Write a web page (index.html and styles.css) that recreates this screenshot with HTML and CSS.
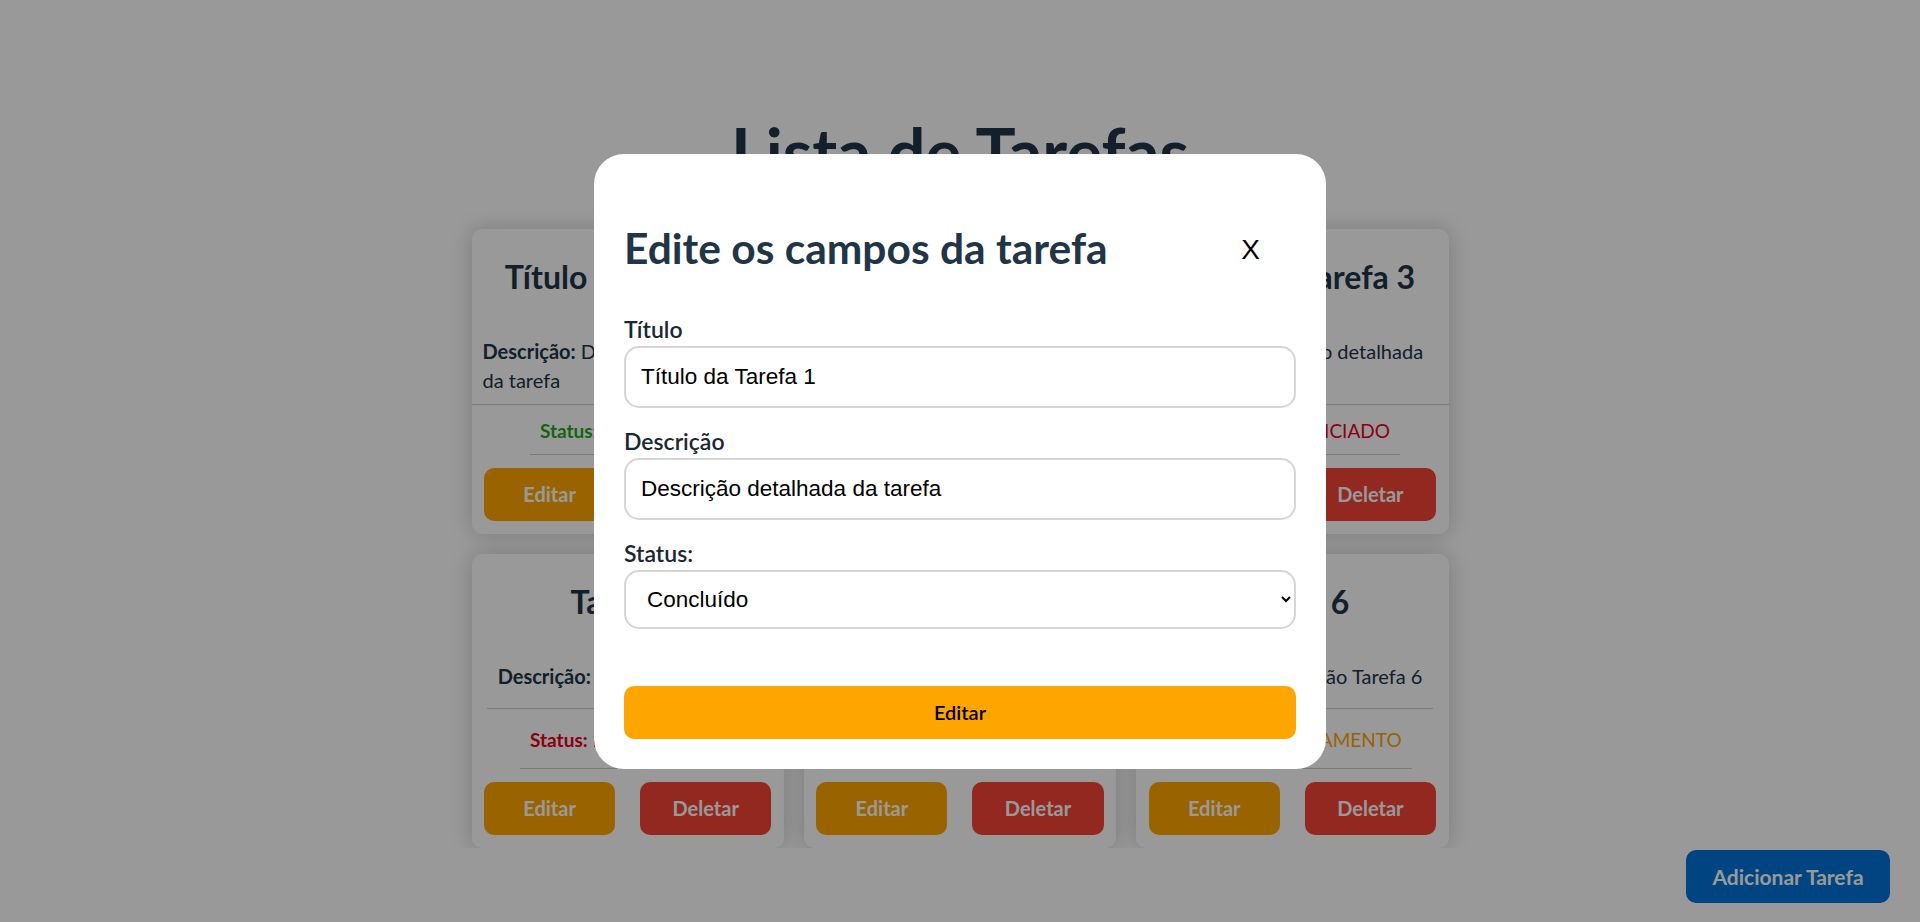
FILE: index.html
```html
<!DOCTYPE html>
<html lang="pt-BR">
<head>
<meta charset="utf-8">
<title>Lista de Tarefas</title>
<link rel="stylesheet" href="styles.css">
</head>
<body>
<div class="app">
  <h1 class="page-title">Lista de Tarefas</h1>
  <section class="board">
    <div class="grid">
      <article class="card">
        <h2 class="card-title">Título da Tarefa 1</h2>
        <p class="card-desc"><strong>Descrição:</strong> Descrição detalhada da tarefa</p>
        <p class="card-status status-done"><strong>Status:</strong>&nbsp;CONCLUÍDO</p>
        <div class="card-actions">
          <button class="btn btn-edit">Editar</button>
          <button class="btn btn-delete">Deletar</button>
        </div>
      </article>
      <article class="card">
        <h2 class="card-title">Título da Tarefa 2</h2>
        <p class="card-desc"><strong>Descrição:</strong> Descrição detalhada da tarefa</p>
        <p class="card-status status-progress"><strong>Status:</strong>&nbsp;EM ANDAMENTO</p>
        <div class="card-actions">
          <button class="btn btn-edit">Editar</button>
          <button class="btn btn-delete">Deletar</button>
        </div>
      </article>
      <article class="card">
        <h2 class="card-title">Título da Tarefa 3</h2>
        <p class="card-desc"><strong>Descrição:</strong> Descrição detalhada da tarefa</p>
        <p class="card-status status-todo"><strong>Status:</strong>&nbsp;NÃO INICIADO</p>
        <div class="card-actions">
          <button class="btn btn-edit">Editar</button>
          <button class="btn btn-delete">Deletar</button>
        </div>
      </article>
      <article class="card">
        <h2 class="card-title">Tarefa 4</h2>
        <p class="card-desc"><strong>Descrição:</strong> Descrição Tarefa 4</p>
        <p class="card-status status-todo"><strong>Status:</strong>&nbsp;NÃO INICIADO</p>
        <div class="card-actions">
          <button class="btn btn-edit">Editar</button>
          <button class="btn btn-delete">Deletar</button>
        </div>
      </article>
      <article class="card">
        <h2 class="card-title">Tarefa 5</h2>
        <p class="card-desc"><strong>Descrição:</strong> Descrição Tarefa 5</p>
        <p class="card-status status-done"><strong>Status:</strong>&nbsp;CONCLUÍDO</p>
        <div class="card-actions">
          <button class="btn btn-edit">Editar</button>
          <button class="btn btn-delete">Deletar</button>
        </div>
      </article>
      <article class="card">
        <h2 class="card-title">Tarefa 6</h2>
        <p class="card-desc"><strong>Descrição:</strong> Descrição Tarefa 6</p>
        <p class="card-status status-progress"><strong>Status:</strong>&nbsp;EM ANDAMENTO</p>
        <div class="card-actions">
          <button class="btn btn-edit">Editar</button>
          <button class="btn btn-delete">Deletar</button>
        </div>
      </article>
    </div>
  </section>
  <button class="add-btn">Adicionar Tarefa</button>
</div>

<div class="overlay">
  <div class="modal" role="dialog" aria-labelledby="modal-title">
    <div class="modal-header">
      <h2 class="modal-title" id="modal-title">Edite os campos da tarefa</h2>
      <button class="modal-close" aria-label="Fechar">X</button>
    </div>
    <form class="modal-form">
      <div class="field">
        <label class="field-label" for="f-title">Título</label>
        <input class="field-input" id="f-title" type="text" value="Título da Tarefa 1">
      </div>
      <div class="field">
        <label class="field-label" for="f-desc">Descrição</label>
        <input class="field-input" id="f-desc" type="text" value="Descrição detalhada da tarefa">
      </div>
      <div class="field">
        <label class="field-label" for="f-status">Status:</label>
        <select class="field-input field-select" id="f-status">
          <option>Não iniciado</option>
          <option>Em andamento</option>
          <option selected>Concluído</option>
        </select>
      </div>
      <button type="button" class="modal-submit">Editar</button>
    </form>
  </div>
</div>
</body>
</html>
```

FILE: styles.css
```css
* { box-sizing: border-box; }

html, body {
  margin: 0;
  height: 100%;
}

body {
  font-family: Lato, "Noto Sans", sans-serif;
  color: #213547;
  background: #ffffff;
  line-height: 1.5;
  overflow: hidden;
}

.app {
  display: flex;
  flex-direction: column;
  align-items: center;
  padding-top: 115px;
}

.page-title {
  margin: 0;
  font-size: 67px;
  line-height: 1.1;
  font-weight: 700;
}

.board {
  width: 100%;
  overflow: hidden;
  padding-top: 40px;
}

.grid {
  width: 977px;
  margin: 0 auto;
  display: grid;
  grid-template-columns: repeat(3, 1fr);
  grid-template-rows: auto 294px;
  gap: 20px 20px;
}

.card {
  background: #ffffff;
  border-radius: 10px;
  box-shadow: 0 0 22px rgba(0, 0, 0, 0.2);
  display: flex;
  flex-direction: column;
  padding: 6px 0 13px;
}

.card-title {
  margin: 18px 10px 0;
  font-size: 32px;
  line-height: 48px;
  font-weight: 700;
  text-align: center;
}

.card-desc {
  flex: 1;
  align-self: center;
  margin: 36px 0 0;
  padding: 0 11px 9px;
  font-size: 20px;
  line-height: 29px;
  border-bottom: 1px solid #cccccc;
}

.card-status {
  flex: 1;
  align-self: center;
  display: flex;
  align-items: center;
  margin: 12px 0 0;
  padding: 0 10px 10px;
  font-size: 19px;
  line-height: 27px;
  border-bottom: 1px solid #cccccc;
}

.status-done { color: #1fa81f; }
.status-todo { color: #e8001c; }
.status-progress { color: #ffa500; }

.card-actions {
  display: flex;
  justify-content: space-around;
  margin-top: 13px;
}

.btn {
  width: 42%;
  height: 53px;
  border: none;
  border-radius: 10px;
  font-family: inherit;
  font-size: 20px;
  font-weight: 700;
  color: #ffffff;
}

.btn-edit { background: #ffa500; }
.btn-delete { background: #f44336; }

.add-btn {
  position: fixed;
  right: 30px;
  bottom: 19px;
  width: 204px;
  height: 53px;
  border: none;
  border-radius: 10px;
  background: #0072d8;
  color: #ffffff;
  font-family: inherit;
  font-size: 21px;
  font-weight: 700;
}

.overlay {
  position: fixed;
  inset: 0;
  background: rgba(0, 0, 0, 0.4);
  display: flex;
  align-items: center;
  justify-content: center;
}

.modal {
  width: 732px;
  background: #ffffff;
  border-radius: 30px;
  padding: 30px;
}

.modal-header {
  display: flex;
  justify-content: space-between;
  align-items: center;
  margin: 35px 0 38px;
}

.modal-title {
  margin: 0;
  font-size: 42.5px;
  line-height: 57px;
  font-weight: 700;
}

.modal-close {
  border: none;
  background: transparent;
  padding: 4px 36px 0 0;
  font-family: "Liberation Sans", Arial, sans-serif;
  font-size: 28px;
  line-height: 53px;
  color: #000000;
}

.modal-form {
  display: flex;
  flex-direction: column;
  gap: 18px;
}

.field {
  display: flex;
  flex-direction: column;
}

.field-label {
  font-size: 23px;
  line-height: 30px;
  font-weight: 600;
  margin-bottom: 2px;
  color: #1b2733;
}

.field-input {
  width: 100%;
  height: 62px;
  border: 2px solid #d6d6d6;
  border-radius: 15px;
  padding: 0 15px;
  font-family: "Liberation Sans", Arial, sans-serif;
  font-size: 22.5px;
  color: #000000;
  background: #ffffff;
}

.field-select {
  height: 59px;
  padding: 0 10px 0 17px;
}

.modal-submit {
  margin-top: 39px;
  height: 53px;
  border: none;
  border-radius: 10px;
  background: #ffa500;
  color: #000000;
  font-family: inherit;
  font-size: 20px;
  font-weight: 600;
}
```
